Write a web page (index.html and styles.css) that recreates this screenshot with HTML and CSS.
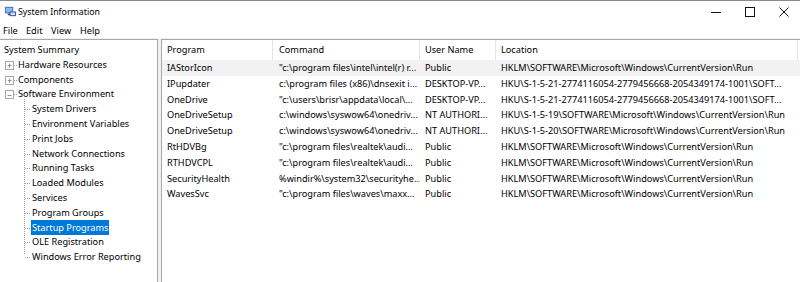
FILE: index.html
```html
<!DOCTYPE html>
<html>
<head>
<meta charset="utf-8">
<link rel="stylesheet" href="styles.css">
</head>
<body>
<div class="window">
  <div class="titlebar">
    <svg class="appicon" width="13" height="13" viewBox="0 0 14 14">
      <rect x="1" y="2" width="9" height="7" fill="#3a6fc4"/>
      <rect x="2" y="3" width="7" height="5" fill="#8fb8f0"/>
      <rect x="4" y="9" width="3" height="2" fill="#555"/>
      <rect x="6" y="7" width="7" height="5" fill="#2d4f9e"/>
      <rect x="7" y="8" width="5" height="3" fill="#cfe0f8"/>
    </svg>
    <span class="title">System Information</span>
    <div class="controls">
      <svg width="10" height="10" viewBox="0 0 10 10"><line x1="0" y1="5.5" x2="10" y2="5.5" stroke="#111" stroke-width="1"/></svg>
      <svg width="10" height="10" viewBox="0 0 10 10"><rect x="0.5" y="0.5" width="9" height="9" fill="none" stroke="#111" stroke-width="1"/></svg>
      <svg width="10" height="10" viewBox="0 0 10 10"><path d="M0.5 0.5L9.5 9.5M9.5 0.5L0.5 9.5" stroke="#111" stroke-width="1"/></svg>
    </div>
  </div>
  <div class="menubar">
    <span class="m-file">File</span><span class="m-edit">Edit</span><span class="m-view">View</span><span class="m-help">Help</span>
  </div>
  <div class="content">
    <div class="tree">
      <div class="node root">System Summary</div>
      <div class="node lvl1"><span class="box">+</span><span class="hl"></span>Hardware Resources</div>
      <div class="node lvl1"><span class="box">+</span><span class="hl"></span>Components</div>
      <div class="node lvl1"><span class="box">−</span><span class="hl"></span>Software Environment</div>
      <div class="children">
        <div class="node lvl2"><span class="hl2"></span>System Drivers</div>
        <div class="node lvl2"><span class="hl2"></span>Environment Variables</div>
        <div class="node lvl2"><span class="hl2"></span>Print Jobs</div>
        <div class="node lvl2"><span class="hl2"></span>Network Connections</div>
        <div class="node lvl2"><span class="hl2"></span>Running Tasks</div>
        <div class="node lvl2"><span class="hl2"></span>Loaded Modules</div>
        <div class="node lvl2"><span class="hl2"></span>Services</div>
        <div class="node lvl2"><span class="hl2"></span>Program Groups</div>
        <div class="node lvl2"><span class="hl2"></span><span class="sel">Startup Programs</span></div>
        <div class="node lvl2"><span class="hl2"></span>OLE Registration</div>
        <div class="node lvl2 last"><span class="hl2"></span>Windows Error Reporting</div>
      </div>
    </div>
    <div class="splitter"></div>
    <div class="list">
      <div class="row head">
        <div class="c1">Program</div><div class="c2">Command</div><div class="c3">User Name</div><div class="c4">Location</div>
      </div>
      <div class="row first">
        <div class="c1">IAStorIcon</div><div class="c2">"c:\program files\intel\intel(r) r...</div><div class="c3">Public</div><div class="c4">HKLM\SOFTWARE\Microsoft\Windows\CurrentVersion\Run</div>
      </div>
      <div class="row">
        <div class="c1">IPupdater</div><div class="c2">c:\program files (x86)\dnsexit i...</div><div class="c3">DESKTOP-VP...</div><div class="c4">HKU\S-1-5-21-2774116054-2779456668-2054349174-1001\SOFT...</div>
      </div>
      <div class="row">
        <div class="c1">OneDrive</div><div class="c2">"c:\users\brisr\appdata\local\...</div><div class="c3">DESKTOP-VP...</div><div class="c4">HKU\S-1-5-21-2774116054-2779456668-2054349174-1001\SOFT...</div>
      </div>
      <div class="row">
        <div class="c1">OneDriveSetup</div><div class="c2">c:\windows\syswow64\onedriv...</div><div class="c3">NT AUTHORI...</div><div class="c4">HKU\S-1-5-19\SOFTWARE\Microsoft\Windows\CurrentVersion\Run</div>
      </div>
      <div class="row">
        <div class="c1">OneDriveSetup</div><div class="c2">c:\windows\syswow64\onedriv...</div><div class="c3">NT AUTHORI...</div><div class="c4">HKU\S-1-5-20\SOFTWARE\Microsoft\Windows\CurrentVersion\Run</div>
      </div>
      <div class="row">
        <div class="c1">RtHDVBg</div><div class="c2">"c:\program files\realtek\audi...</div><div class="c3">Public</div><div class="c4">HKLM\SOFTWARE\Microsoft\Windows\CurrentVersion\Run</div>
      </div>
      <div class="row">
        <div class="c1">RTHDVCPL</div><div class="c2">"c:\program files\realtek\audi...</div><div class="c3">Public</div><div class="c4">HKLM\SOFTWARE\Microsoft\Windows\CurrentVersion\Run</div>
      </div>
      <div class="row">
        <div class="c1">SecurityHealth</div><div class="c2">%windir%\system32\securityhe...</div><div class="c3">Public</div><div class="c4">HKLM\SOFTWARE\Microsoft\Windows\CurrentVersion\Run</div>
      </div>
      <div class="row">
        <div class="c1">WavesSvc</div><div class="c2">"c:\program files\waves\maxx...</div><div class="c3">Public</div><div class="c4">HKLM\SOFTWARE\Microsoft\Windows\CurrentVersion\Run</div>
      </div>
    </div>
  </div>
</div>
</body>
</html>
```
FILE: styles.css
```css
* { box-sizing: border-box; }
html, body { margin: 0; padding: 0; }
body {
  width: 800px; height: 282px; overflow: hidden;
  font-family: "Noto Sans", "Open Sans", sans-serif;
  font-size: 9.2px; color: #000; background: #fff;
}
.window { display: flex; flex-direction: column; height: 282px; border-top: 1px solid #8a8a8a; }
.titlebar { height: 21px; display: flex; align-items: center; padding-left: 4px; }
.appicon { margin-right: 1px; }
.title { font-size: 8.8px; }
.controls { margin-left: auto; display: flex; gap: 24px; padding-right: 11px; }
.menubar { height: 16px; display: flex; align-items: center; position: relative; }
.menubar span { display: block; }
.m-file { margin-left: 3px; width: 23px; }
.m-edit { width: 25px; }
.m-view { width: 29px; }
.content { flex: 1; display: flex; background: #f0f0f0; padding-top: 1px; min-height: 0; }
.tree { width: 158px; background: #fff; border-right: 1px solid #a8a8a8; border-top: 1px solid #a8a8a8; padding-top: 3px; }
.splitter { width: 3px; }
.list { flex: 1; background: #fff; border-left: 1px solid #a8a8a8; border-top: 1px solid #a8a8a8; }
.node { height: 14.8px; line-height: 14.8px; white-space: nowrap; position: relative; }
.root { padding-left: 4px; }
.lvl1 { padding-left: 18px; }
.box {
  position: absolute; left: 5px; top: 3px; width: 9px; height: 9px;
  border: 1px solid #a8a8a8; font-size: 8px; line-height: 7px; text-align: center; color: #555;
}
.hl { position: absolute; left: 14px; top: 7px; width: 3px; border-top: 1px dotted #a0a0a0; }
.children { position: relative; }
.children::before {
  content: ""; position: absolute; left: 24px; top: -3px; height: 155px; border-left: 1px dotted #a0a0a0;
}
.lvl2 { padding-left: 32px; }
.hl2 { position: absolute; left: 25px; top: 7px; width: 5px; border-top: 1px dotted #a0a0a0; }
.sel { background: #0078d7; color: #fff; padding: 1px 1px; margin-left: -1px; }
.row { display: flex; height: 15.8px; line-height: 15.8px; white-space: nowrap; }
.row > div { overflow: hidden; padding-left: 5px; }
.head { height: 20px; line-height: 20px; }
.head > div { border-right: 1px solid #e5e5e5; }
.first { background: #f2f2f2; }
.c1 { width: 111px; }
.c2 { width: 147px; padding-left: 6px !important; }
.c3 { width: 76px; }
.c4 { width: 302px; }
```
